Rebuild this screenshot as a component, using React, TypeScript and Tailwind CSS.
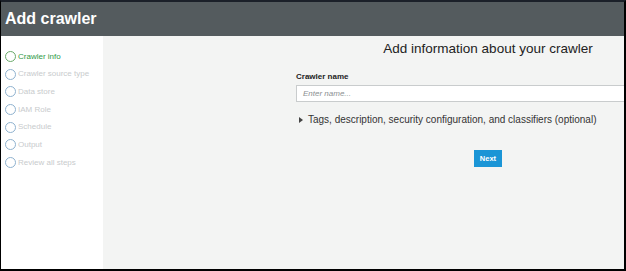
import React from "react";

const steps = [
  "Crawler info",
  "Crawler source type",
  "Data store",
  "IAM Role",
  "Schedule",
  "Output",
  "Review all steps",
];

export default function App() {
  return (
    <div className="w-[626px] h-[271px] overflow-hidden border-t-2 border-t-[#1b2029] border-l border-r-2 border-b-2 border-black flex flex-col font-['Liberation_Sans',Arial,sans-serif]">
      <div className="h-[34px] shrink-0 bg-[#545b5e] flex items-center px-[4px]">
        <h1 className="text-white font-bold text-[16px] leading-none">Add crawler</h1>
      </div>
      <div className="flex flex-1 min-h-0">
        <div className="w-[102px] shrink-0 bg-white pt-[15px] pl-[4px] flex flex-col gap-[6.7px]">
          {steps.map((s, i) => (
            <div key={s} className="flex items-center gap-[2px] h-[11px]">
              <span
                className={
                  i === 0
                    ? "w-[11px] h-[11px] rounded-full border border-[#6aaa6a] shrink-0"
                    : "w-[11px] h-[11px] rounded-full border border-[#8fb2cf] shrink-0"
                }
              />
              <span
                className={
                  i === 0
                    ? "text-[8px] text-[#2f9a47] whitespace-nowrap"
                    : "text-[8px] text-[#c8cbcd] whitespace-nowrap"
                }
              >
                {s}
              </span>
            </div>
          ))}
        </div>
        <div className="flex-1 bg-[#f3f4f3] overflow-hidden">
          <div className="ml-[193px] w-[384px] flex flex-col pt-[4px]">
            <h2 className="text-center text-[13.5px] text-[#222] leading-[18px]">
              Add information about your crawler
            </h2>
            <label className="mt-[14px] text-[8px] font-bold text-[#222] leading-[10px]">Crawler name</label>
            <div className="mt-[3px] h-[17px] bg-white border border-[#c9cccd] flex items-center pl-[6px]">
              <span className="text-[8px] italic text-[#8b8f92]">Enter name...</span>
            </div>
            <div className="mt-[11px] flex items-center gap-[5px] pl-[3px]">
              <svg width="4" height="6" viewBox="0 0 4 6">
                <path d="M0 0 L4 3 L0 6 Z" fill="#444" />
              </svg>
              <span className="text-[10px] text-[#333] leading-[13px] whitespace-nowrap">
                Tags, description, security configuration, and classifiers (optional)
              </span>
            </div>
            <div className="mt-[24px] flex justify-center">
              <button className="w-[28px] h-[17px] bg-[#1a95d6] text-white text-[7.5px] font-bold flex items-center justify-center">
                Next
              </button>
            </div>
          </div>
        </div>
      </div>
    </div>
  );
}
